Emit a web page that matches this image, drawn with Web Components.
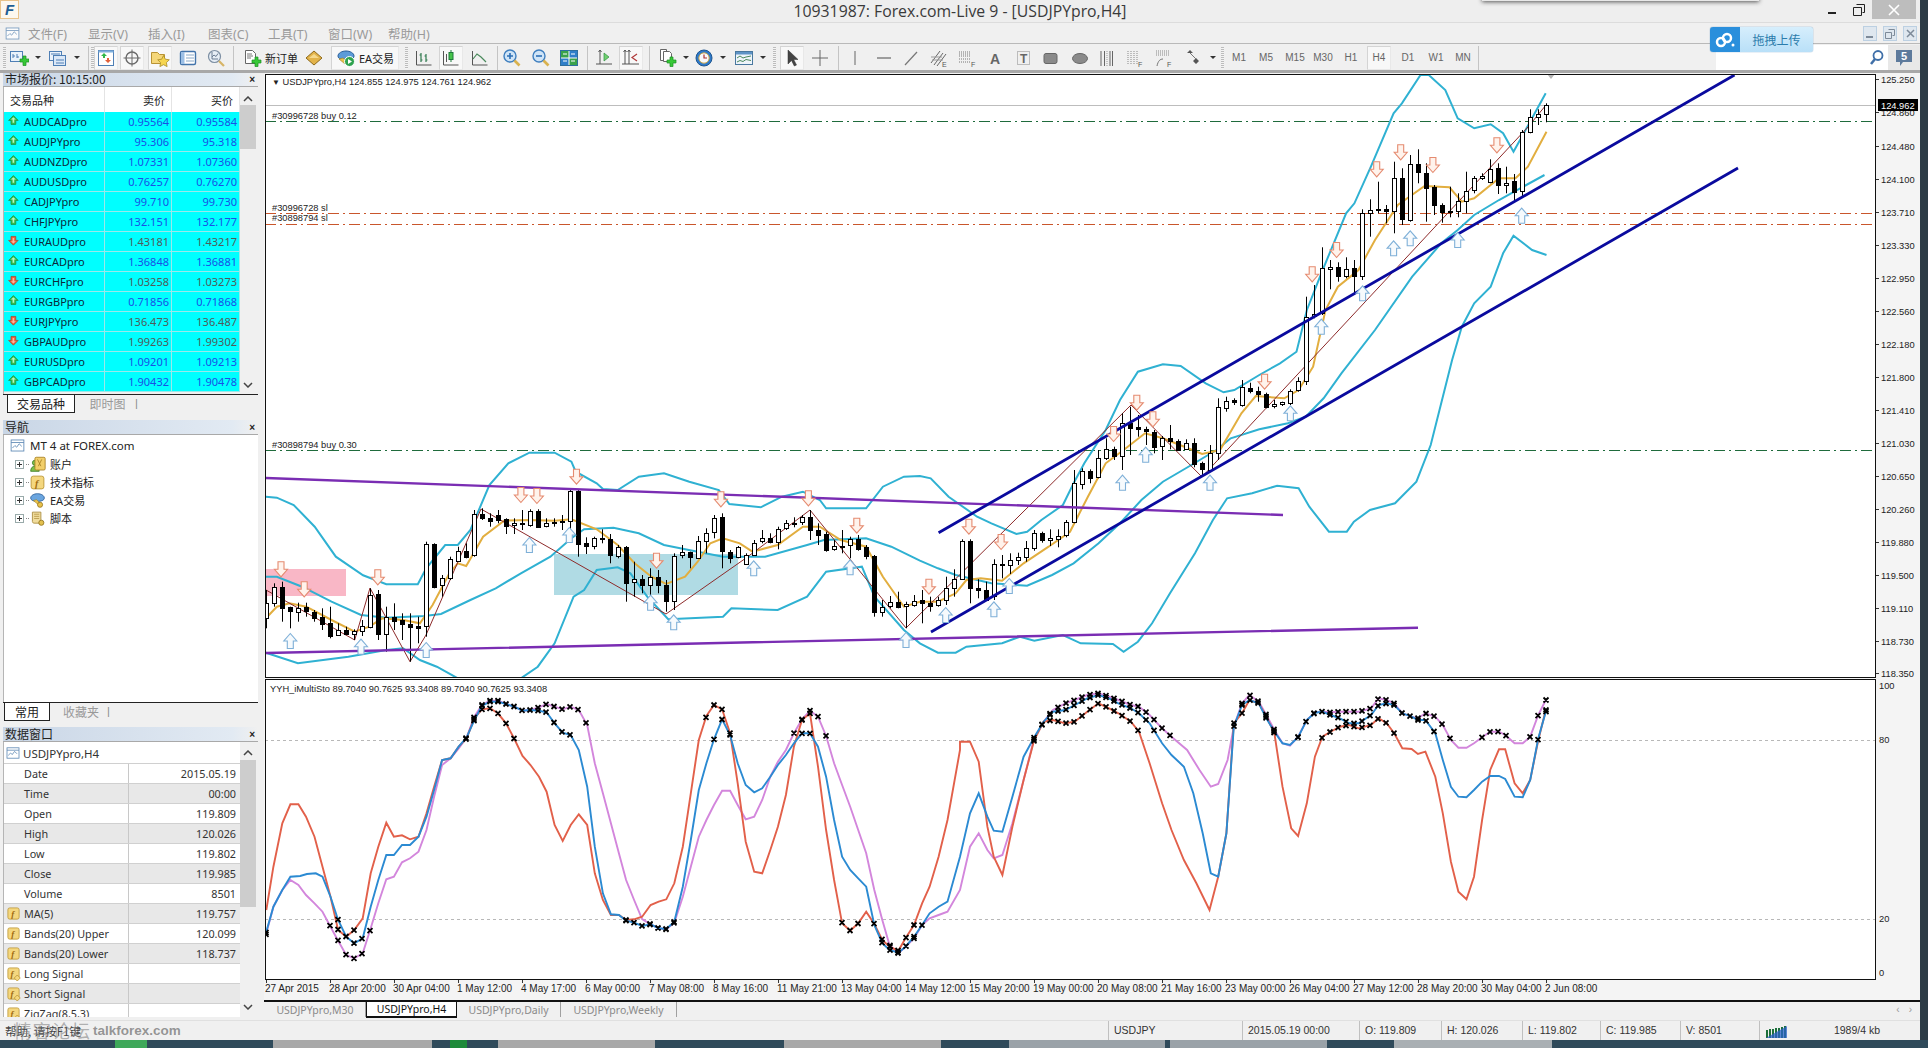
<!DOCTYPE html>
<html lang="zh">
<head>
<meta charset="utf-8">
<title>MetaTrader</title>
<style>
  html, body { margin:0; padding:0; width:1928px; height:1048px; overflow:hidden; background:#2c3b45; }
  body { font-family:"Liberation Sans","Noto Sans CJK SC",sans-serif; }
</style>
</head>
<body>
<mt-app>
  <mt-titlebar></mt-titlebar>
  <mt-menubar></mt-menubar>
  <mt-toolbar></mt-toolbar>
  <mt-main>
    <mt-dock>
      <mt-panel heading="市场报价: 10:15:00" style="height:346px"><market-watch></market-watch></mt-panel>
      <mt-panel heading="导航" style="height:302px;margin-top:2px"><nav-tree></nav-tree></mt-panel>
      <mt-panel heading="数据窗口" style="height:290px;margin-top:5px"><data-window></data-window></mt-panel>
    </mt-dock>
    <chart-window></chart-window>
  </mt-main>
  <mt-status></mt-status>
</mt-app>
<mt-taskbar></mt-taskbar>

<script>
const UI_FONT = '"Noto Sans","Noto Sans CJK SC",sans-serif';

function open(el, html) {
  const root = el.attachShadow({ mode: 'open' });
  root.innerHTML = html;
  return root;
}

// small icons, 20x20 box
const ICONS = {
  newchart: '<rect x="1.5" y="3.5" width="12" height="10" fill="#eaf2fb" stroke="#4f7fb5"/><path d="M4 10V6m0 2h2m2 2V6m0 3h2" stroke="#4f7fb5" fill="none"/><path d="M11 11h3V8h3v3h3v3h-3v3.5h-3V14h-3z" fill="#37c837" stroke="#1b8f24" stroke-width=".7"/>',
  profile: '<rect x="1.5" y="3.5" width="12" height="9" fill="#eaf2fb" stroke="#4f7fb5"/><rect x="5.5" y="7.5" width="12" height="10" fill="#dbe8f7" stroke="#4f7fb5"/><path d="M3 6h9M8 12h8m-8 3h8" stroke="#4f7fb5" fill="none"/>',
  market: '<rect x="2.5" y="2.5" width="15" height="15" fill="#fff" stroke="#4f7fb5"/><rect x="2.5" y="2.5" width="15" height="2" fill="#7fb0de"/><path d="M8 5l3 3H9v2H7V8H5z" fill="#2fb84a"/><path d="M12 15l-3-3h2v-2h2v2h2z" fill="#e2603a"/>',
  crosshair: '<circle cx="10" cy="10" r="6" fill="none" stroke="#6a6a6a" stroke-width="1.4"/><path d="M10 1.5v17M1.5 10h17" stroke="#6a6a6a"/>',
  navigator: '<path d="M1.5 4.5h6l2 2h5v9h-13z" fill="#f5d77a" stroke="#b99334"/><path d="M13.5 7.5l1.8 3.7 4 .6-2.9 2.8.7 4-3.6-1.9-3.6 1.9.7-4-2.9-2.8 4-.6z" fill="#f6d54e" stroke="#a88a27" stroke-width=".8"/>',
  terminal: '<rect x="2.5" y="3.5" width="15" height="13" rx="1.5" fill="#fff" stroke="#4374ab" stroke-width="1.4"/><rect x="3" y="4" width="3.5" height="12" fill="#9dc0e6"/><path d="M8 7h8M8 10h8M8 13h8" stroke="#8aa8c6"/>',
  tester: '<circle cx="8.5" cy="8.5" r="6" fill="#e7eef6" stroke="#7d8fa3" stroke-width="1.2"/><path d="M6 4v7h6M6 9l2-2 2 1.5 2-3" stroke="#6a7c92" fill="none"/><path d="M13 13l5 5" stroke="#d7b466" stroke-width="2.2"/>',
  neworder: '<path d="M3.5 2.5h7l3 3v10h-10z" fill="#fff" stroke="#666"/><path d="M5 6h5M5 8h6M5 10h4" stroke="#777"/><path d="M10 12h3V9h3v3h3v3h-3v3.5h-3V15h-3z" fill="#37c837" stroke="#1b8f24" stroke-width=".7"/>',
  goldtag: '<path d="M2 10l8-7 8 7-8 7z" fill="#e2b34a" stroke="#8e6a1d"/><path d="M5 10l5-4 5 4" fill="#f5d98c"/>',
  ea: '<path d="M2 8c0-3 4-5 8-5s8 2 8 5-4 4-8 4-8-1-8-4z" fill="#5c9bd8" stroke="#2a5f9a"/><path d="M3 11l6 5 2-3-4-3z" fill="#e9c14a" stroke="#9a7a20" stroke-width=".6"/><circle cx="13.5" cy="13.5" r="5" fill="#2fa34f" stroke="#fff"/><path d="M12 11v5l4-2.500z" fill="#fff"/>',
  bars: '<path d="M2.5 3v14h15" stroke="#555" fill="none"/><path d="M7 5v9M5.5 7H7m0 5h1.5M12 6v8m-1.5-6H12m0 4h1.5" stroke="#2f7a4e" stroke-width="1.2" fill="none"/>',
  candles: '<path d="M2.5 3v14h15" stroke="#555" fill="none"/><path d="M10 2v12" stroke="#1d7a3a"/><rect x="8" y="4.5" width="4" height="7" fill="#46c34a" stroke="#1d7a3a"/><path d="M5.5 6v8" stroke="#555"/>',
  line: '<path d="M2.5 3v14h15" stroke="#555" fill="none"/><path d="M3 11l4-5 4 3 5 5" stroke="#4a8a5c" fill="none" stroke-width="1.2"/>',
  zoomin: '<circle cx="8" cy="8" r="6" fill="#cfe4f7" stroke="#3f7fbf" stroke-width="1.4"/><path d="M5 8h6M8 5v6" stroke="#2c6fb5" stroke-width="1.6"/><path d="M12.5 12.5l5 5" stroke="#d9b24f" stroke-width="2.6"/>',
  zoomout: '<circle cx="8" cy="8" r="6" fill="#cfe4f7" stroke="#3f7fbf" stroke-width="1.4"/><path d="M5 8h6" stroke="#2c6fb5" stroke-width="1.6"/><path d="M12.5 12.5l5 5" stroke="#d9b24f" stroke-width="2.6"/>',
  tile: '<rect x="1.5" y="2.5" width="17" height="15" fill="#fff" stroke="#2e6f9e"/><rect x="2" y="3" width="7.5" height="6.5" fill="#3aa24a"/><rect x="10.5" y="3" width="7.5" height="6.5" fill="#2f7fc9"/><rect x="2" y="10.5" width="7.5" height="6.5" fill="#2f7fc9"/><rect x="10.5" y="10.5" width="7.5" height="6.5" fill="#3aa24a"/><path d="M4 6h4m4 0h4M4 13h4m4 0h4" stroke="#fff"/>',
  shift: '<path d="M6 2v14M2 16h16" stroke="#555" fill="none"/><path d="M4.5 4L6 2l1.5 2" stroke="#555" fill="none"/><path d="M10 5l5 4-5 4z" fill="#6fd06f" stroke="#2f8f3f" stroke-width=".7"/>',
  autoscroll: '<path d="M4 2v14m4-14v14M1 16h17" stroke="#555" fill="none"/><path d="M2.5 4L4 2l1.5 2m1 0L8 2l1.5 2" stroke="#555" fill="none"/><path d="M16 6l-5 3.5L16 13" stroke="#b03a3a" fill="none" stroke-width="1.2"/>',
  newind: '<path d="M3.5 1.5h6v11h-6z" fill="#fff" stroke="#666"/><path d="M6.5 3.5h6l2 2v8h-8z" fill="#fff" stroke="#666"/><path d="M10 12h3V9h3v3h3v3h-3v3.5h-3V15h-3z" fill="#37c837" stroke="#1b8f24" stroke-width=".7"/>',
  clock: '<circle cx="10" cy="10" r="8" fill="#2e79c9" stroke="#1d558f"/><circle cx="10" cy="10" r="5.2" fill="#f7f9fc" stroke="#c9a44a"/><path d="M10 6.5V10h3" stroke="#b03030" stroke-width="1.2" fill="none"/>',
  template: '<rect x="1.5" y="3.5" width="17" height="13" fill="#eef4fb" stroke="#49789f"/><rect x="2" y="4" width="16" height="2.5" fill="#5e93c6"/><path d="M3 10l3-2 3 2 3-1 5-1M3 14l3-1.5 3 1 3-2 5 1" stroke="#4c8a5d" fill="none"/>',
  cursor: '<path d="M6 2v14l3.5-3.5 2.800 5.500 2.200-1-2.800-5.500H16z" fill="#444" stroke="#333" stroke-width=".5"/>',
  cross: '<path d="M10 2v16M2 10h16" stroke="#666"/>',
  vline: '<path d="M10 3v14" stroke="#666"/>',
  hline: '<path d="M3 10h14" stroke="#666" stroke-width="1.2"/>',
  trend: '<path d="M4 17L16 4" stroke="#777" stroke-width="1.2"/>',
  echan: '<path d="M2 15L11 3M5 17l9-12M8 18l9-12" stroke="#666"/><path d="M2 9h11M3 12h11" stroke="#999"/><text x="13" y="19" font-size="7" fill="#555" font-family="Liberation Sans">E</text>',
  fibo: '<path d="M2 4h12M2 6h12M2 8h12M2 11h12M2 14h12" stroke="#777" stroke-dasharray="1 1"/><text x="14" y="19" font-size="7" fill="#555" font-family="Liberation Sans">F</text>',
  atext: '<text x="5" y="16" font-size="14" fill="#666" font-family="Liberation Sans" font-weight="bold">A</text>',
  ttext: '<rect x="3.5" y="3.5" width="12" height="13" fill="none" stroke="#888" stroke-dasharray="1 1"/><text x="6" y="15" font-size="12" fill="#666" font-family="Liberation Sans" font-weight="bold">T</text>',
  rect: '<rect x="3" y="5.5" width="13" height="10" rx="2" fill="#8a8a8a" stroke="#666"/>',
  ellipse: '<ellipse cx="10" cy="10.5" rx="7.5" ry="5" fill="#8a8a8a" stroke="#666"/>',
  cycle: '<path d="M4 3v15M7.5 3v15M13 3v15M15.5 3v15" stroke="#666"/><path d="M10 3v15" stroke="#999" stroke-dasharray="1 1"/>',
  fgrid: '<path d="M3 3v13M6 3v13M9 3v13M12 3v13" stroke="#888" stroke-dasharray="1 1"/><text x="13" y="19" font-size="7" fill="#555" font-family="Liberation Sans">F</text>',
  farcs: '<path d="M2 3h14M2 5h14M2 7h14" stroke="#888" stroke-dasharray="1 1"/><path d="M3 18c1-5 3-7 6-7" stroke="#777" fill="none"/><text x="13" y="19" font-size="7" fill="#555" font-family="Liberation Sans">F</text>',
  arrows: '<path d="M6 2l3 3H3zM12 10l3 3-3 3-3-3z" fill="#555"/><path d="M6 5l6 6" stroke="#777"/>',
  chartwin: '<rect x="2.5" y="3.5" width="15" height="13" fill="#fff" stroke="#5b87b4"/><path d="M2.5 6.5h15" stroke="#5b87b4"/><path d="M4 13l3-3 2 2 3-4 3 3" stroke="#5b87b4" fill="none"/>',
  fbox: '<rect x="2.5" y="2.5" width="15" height="15" rx="2.5" fill="#f4d77f" stroke="#b8922e"/><text x="7" y="15" font-size="12" font-style="italic" font-weight="bold" fill="#a06a10" font-family="Liberation Serif">f</text>',
  fboxd: '<rect x="2.5" y="2.5" width="15" height="15" rx="2.5" fill="#f4d77f" stroke="#b8922e"/><text x="6" y="14" font-size="12" font-style="italic" font-weight="bold" fill="#a06a10" font-family="Liberation Serif">f</text><path d="M15 12l4 4-4 4-4-4z" fill="#f4d77f" stroke="#b8922e"/>',
  account: '<circle cx="7" cy="8" r="3" fill="#7cc14d" stroke="#3e7d24"/><path d="M2 18c0-4 2-6 5-6s5 2 5 6z" fill="#7cc14d" stroke="#3e7d24"/><rect x="7" y="1.5" width="12" height="15" rx="1.5" fill="#f2cf6a" stroke="#a67f22"/><path d="M10 4l4 8m1-8l-4 8" stroke="#a67f22"/>',
  eatree: '<path d="M2 7c0-3 4-5 8-5s8 2 8 5-4 4-8 4-8-1-8-4z" fill="#6aa5df" stroke="#2a5f9a"/><path d="M5 10l6 5 2-2-4-4z" fill="#e9c14a" stroke="#9a7a20" stroke-width=".6"/><circle cx="13" cy="15" r="3" fill="#e9c14a" stroke="#9a7a20"/>',
  script: '<path d="M4 2.5h10v13H6c-2 0-2-2-2-2z" fill="#f0dc9c" stroke="#a88a3c"/><path d="M6 5h6M6 7.5h6M6 10h6" stroke="#b89a4c"/><circle cx="14.5" cy="15" r="3" fill="#e3c04f" stroke="#94761f"/>',
  up: '<path d="M8 2l6 6h-3v5H5V8H2z" fill="#34c24b" stroke="#1f7a30" stroke-width=".8"/><path d="M8 4L5 7h2v4h2V7h2z" fill="#bcf2c0"/>',
  down: '<path d="M8 14L2 8h3V3h6v5h3z" fill="#f0603a" stroke="#a63a1e" stroke-width=".8"/><path d="M8 12l3-3H9V5H7v4H5z" fill="#fbb59c"/>'
};

function icon(name, size) {
  const s = size || 20;
  return `<svg xmlns="http://www.w3.org/2000/svg" width="${s}" height="${s}" viewBox="0 0 20 20" style="display:block;flex:none">${ICONS[name]}</svg>`;
}

class MtApp extends HTMLElement {
  constructor() {
    super();
    open(this, `<style>
      :host { display:flex; flex-direction:column; width:1920px; height:1040px; background:#f0f0f0; position:relative; }
    </style><slot></slot>`);
  }
}

class MtTitlebar extends HTMLElement {
  constructor() {
    super();
    open(this, `<style>
      :host { display:flex; align-items:center; justify-content:center; height:23px; flex:none; background:#eeeeee;
        border-bottom:1px solid #dcdcdc; position:relative; box-sizing:border-box; }
      .logo { position:absolute; left:0; top:0; width:19px; height:19px; box-sizing:border-box; border:1px solid #e9c48c;
        background:#fdf8ef; font:italic bold 15px/17px "Liberation Sans"; color:#1f5f95; text-align:center; }
      .title { font:15.8px/23px "Open Sans",sans-serif; color:#3a3a3a; }
      .panel { position:absolute; left:1482px; top:-6px; width:277px; height:7px; background:#e8e8e8; box-shadow:0 1px 4px #555; }
      .btns { position:absolute; right:4px; top:0; display:flex; align-items:flex-start; }
      .b { width:26px; height:19px; display:flex; align-items:center; justify-content:center; }
      .close { width:44px; background:#bdbdbd; }
    </style>
    <div class="logo">F</div>
    <div class="title">10931987: Forex.com-Live 9 - [USDJPYpro,H4]</div>
    <div class="panel"></div>
    <div class="btns">
      <div class="b"><svg width="10" height="10"><rect y="7" width="8" height="2" fill="#222"/></svg></div>
      <div class="b"><svg width="12" height="12"><path d="M3.5.5h8v8h-2M.5 3.5h8v8h-8z" fill="#eee" stroke="#222"/></svg></div>
      <div class="b close"><svg width="12" height="12"><path d="M1 1l10 10M11 1L1 11" stroke="#fff" stroke-width="1.6"/></svg></div>
    </div>`);
  }
}

class MtMenubar extends HTMLElement {
  constructor() {
    super();
    const items = ['文件(F)', '显示(V)', '插入(I)', '图表(C)', '工具(T)', '窗口(W)', '帮助(H)'];
    open(this, `<style>
      :host { display:flex; align-items:center; height:21px; flex:none; background:#f0f0f0; border-bottom:1px solid #b9b9b9;
        box-sizing:border-box; position:relative; font:12.5px ${UI_FONT}; color:#9a9a9a; padding-left:4px; }
      .m { width:60px; flex:none; white-space:nowrap; }
      .ic { width:24px; flex:none; opacity:.8; }
      .mdi { position:absolute; right:3px; top:3px; display:flex; gap:6px; }
      .mdi div { width:14px; height:15px; box-sizing:border-box; border:1px solid #bcd0e2; background:#dfe7ef; color:#7d8a99; display:flex; align-items:center; justify-content:center; }
      .up { position:absolute; left:1710px; top:4px; width:103px; height:25px; display:flex; border-radius:3px; box-shadow:0 0 1px #1a6aa8; overflow:hidden; z-index:5; }
      .up .l { width:30px; background:#2a8fdc; display:flex; align-items:center; justify-content:center; }
      .up .r { flex:1; background:linear-gradient(#d6eefc,#b9e0f8); color:#2b7cab; font:12px "Noto Sans CJK SC",sans-serif; line-height:25px; text-align:center; }
    </style>
    <div class="ic">${icon('chartwin', 17)}</div>
    ${items.map(t => `<div class="m">${t}</div>`).join('')}
    <div class="mdi">
      <div><svg width="8" height="8"><rect y="6" width="7" height="2" fill="#7d8a99"/></svg></div>
      <div><svg width="10" height="10"><path d="M3.5.5h6v6h-2M.5 3.5h6v6h-6z" fill="none" stroke="#7d8a99"/></svg></div>
      <div><svg width="9" height="9"><path d="M1 1l7 7M8 1L1 8" stroke="#7d8a99" stroke-width="1.5"/></svg></div>
    </div>
    <div class="up">
      <div class="l"><svg width="22" height="18"><circle cx="7" cy="11" r="4" fill="none" stroke="#fff" stroke-width="2.5"/><circle cx="13" cy="7" r="4" fill="none" stroke="#fff" stroke-width="2.5"/><circle cx="19" cy="14" r="1.5" fill="#fff"/></svg></div>
      <div class="r">拖拽上传</div>
    </div>`);
  }
}

class TbButton extends HTMLElement {
  constructor() { super(); this.attachShadow({ mode: 'open' }); }
  connectedCallback() {
    const name = this.getAttribute('icon');
    const label = this.getAttribute('label');
    this.shadowRoot.innerHTML = `<style>
      :host { display:flex; align-items:center; justify-content:center; height:24px; flex:none; box-sizing:border-box;
        font:11px ${UI_FONT}; color:#222; gap:3px; border:1px solid transparent; }
      :host([pressed]) { background:#f8f8f8; border-color:#d4d4d4 #e8e8e8 #e8e8e8 #d4d4d4; }
      .tf { font:10px "Liberation Sans",sans-serif; color:#666; }
      .arr { width:0; height:0; border:3px solid transparent; border-top:3px solid #333; border-bottom:0; margin-left:3px; }
    </style>
    ${name ? icon(name) : ''}
    ${label ? `<span class="${this.hasAttribute('tf') ? 'tf' : ''}">${label}</span>` : ''}
    ${this.hasAttribute('arrow') ? '<i class="arr"></i>' : ''}`;
  }
}

class MtToolbar extends HTMLElement {
  constructor() {
    super();
    const items = [
      ['h', 4], ['newchart', 18, 22, 'a'], ['profile', 57, 22, 'a'],
      ['s', 88], ['h', 92],
      ['market', 106, 24, 'p'], ['crosshair', 132, 24, 'p'], ['navigator', 160, 24, 'p'], ['terminal', 188, 24], ['tester', 216, 24],
      ['s', 233], ['neworder', 270, 60, '', '新订单'], ['goldtag', 314, 22], ['ea', 365, 68, 'p', 'EA交易'],
      ['h', 406], ['bars', 424, 24], ['candles', 451, 24, 'p'], ['line', 480, 24],
      ['s', 497], ['zoomin', 512, 24], ['zoomout', 541, 24], ['tile', 569, 24],
      ['s', 587], ['shift', 604, 24], ['autoscroll', 631, 24, 'p'],
      ['s', 649], ['newind', 666, 22, 'a'], ['clock', 703, 22, 'a'], ['template', 743, 22, 'a'],
      ['h', 774], ['cursor', 792, 24, 'p'], ['cross', 820, 24],
      ['s', 838], ['vline', 855, 24], ['hline', 884, 24], ['trend', 911, 24], ['echan', 939, 24], ['fibo', 967, 24],
      ['atext', 995, 24], ['ttext', 1024, 24], ['rect', 1051, 24], ['ellipse', 1080, 24], ['cycle', 1107, 24],
      ['fgrid', 1135, 24], ['farcs', 1164, 24], ['arrows', 1193, 22, 'a'],
      ['h', 1222], ['t', 1239, 'M1'], ['t', 1266, 'M5'], ['t', 1295, 'M15'], ['t', 1323, 'M30'], ['t', 1351, 'H1'],
      ['t', 1379, 'H4', 'p'], ['t', 1408, 'D1'], ['t', 1436, 'W1'], ['t', 1463, 'MN'], ['s', 1478]
    ];
    // each item sits in the flow, margin makes up the distance from the one before
    let end = 0;
    let html = '';
    for (const it of items) {
      const kind = it[0];
      const c = it[1];
      let w, cell;
      if (kind === 's') { w = 1; cell = '<i class="sep"></i>'; }
      else if (kind === 'h') { w = 3; cell = '<i class="grip"></i>'; }
      else if (kind === 't') {
        w = 24;
        cell = `<tb-button style="width:24px" label="${it[2]}" tf ${it[3] ? 'pressed' : ''}></tb-button>`;
      } else {
        w = it[2];
        const hasArrow = it[3] === 'a';
        const label = it[4] ? `label="${it[4]}"` : '';
        const full = hasArrow ? w + 12 : w;
        const extra = hasArrow ? 'justify-content:flex-start;padding-left:1px' : '';
        cell = `<tb-button style="width:${full}px;${extra}" icon="${kind}" ${label} ${hasArrow ? 'arrow' : ''} ${it[3] === 'p' ? 'pressed' : ''}></tb-button>`;
        html += `<span class="cell" style="margin-left:${c - w / 2 - end}px">${cell}</span>`;
        end = c - w / 2 + full;
        continue;
      }
      html += `<span class="cell" style="margin-left:${c - w / 2 - end}px">${cell}</span>`;
      end = c - w / 2 + w;
    }
    open(this, `<style>
      :host { display:flex; align-items:center; height:29px; flex:none; box-sizing:border-box; background:#f0f0f0;
        border-bottom:3px solid #a8a8a8; position:relative; padding-top:1px; }
      .cell { display:block; flex:none; }
      .sep { display:block; width:1px; height:24px; background:#c4c4c4; }
      .grip { display:block; width:3px; height:22px; background:repeating-linear-gradient(#bcbcbc 0 1px,#f4f4f4 1px 2px); }
      .search { position:absolute; left:1716px; top:1px; height:25px; width:172px; background:#fff; display:flex; align-items:center; justify-content:flex-end; padding-right:4px; box-sizing:border-box; }
      .badge { position:absolute; left:1888px; top:1px; height:25px; width:32px; background:#e8e8e8; display:flex; align-items:center; justify-content:center; }
    </style>${html}
    <div class="search"><svg width="16" height="18"><circle cx="10" cy="6.5" r="4.5" fill="none" stroke="#3f6fa8" stroke-width="1.8"/><path d="M7 10l-4 5" stroke="#3f6fa8" stroke-width="2.5"/></svg></div>
    <div class="badge"><svg width="18" height="20"><path d="M1 2h16v12H8l-3 4v-4H1z" fill="#5d7a9c"/><text x="9" y="12" font-size="11" font-weight="bold" text-anchor="middle" fill="#fff" font-family="Liberation Sans">5</text></svg></div>`);
  }
}

class MtMain extends HTMLElement {
  constructor() {
    super();
    open(this, `<style>:host { display:flex; flex:1; min-height:0; }</style><slot></slot>`);
  }
}

class MtDock extends HTMLElement {
  constructor() {
    super();
    // the first title bar starts a pixel above the chart's top edge
    open(this, `<style>
      :host { display:flex; flex-direction:column; width:264px; flex:none; box-sizing:border-box; padding:0 6px 0 3px; margin-top:-1px; background:#f0f0f0; }
    </style><slot></slot>`);
  }
}

class MtPanel extends HTMLElement {
  constructor() {
    super();
    open(this, `<style>
      :host { display:flex; flex-direction:column; flex:none; box-sizing:border-box; }
      .head { height:15px; flex:none; display:flex; align-items:center; justify-content:space-between; box-sizing:border-box;
        background:linear-gradient(90deg,#c9d6e6,#e2eaf3 90%,#f0f0f0); border-bottom:1px solid #a9a9a9;
        font:12px/14px "Noto Sans CJK SC",sans-serif; color:#222; padding-left:2px; }
      .x { font:bold 10px "Liberation Sans",sans-serif; color:#222; margin-right:3px; }
      .body { flex:1; min-height:0; border-left:1px solid #b5b5b5; background:#fff; display:flex; }
    </style>
    <div class="head"><span>${this.getAttribute('heading')}</span><span class="x">×</span></div>
    <div class="body"><slot></slot></div>`);
  }
}

const SCROLL_CSS = `
  .sb { width:16px; flex:none; background:#f0f0f0; position:relative; }
  .sb .thumb { position:absolute; left:0; right:0; background:#cdcdcd; }
  .sb svg { position:absolute; left:3px; }
  .tabs { height:24px; flex:none; box-sizing:border-box; background:#f0f0f0; border-top:1px solid #222; display:flex; font:12px "Noto Sans CJK SC",sans-serif; color:#999; margin-left:-1px; }
  .tab { display:flex; align-items:center; justify-content:center; height:17px; }
  .tab.on { background:#fff; color:#222; border:1px solid #222; border-top:0; }
  .bar { color:#888; height:17px; line-height:17px; font:11px/17px "Liberation Sans"; }
`;

class MarketWatch extends HTMLElement {
  constructor() {
    super();
    const rows = [
      ['AUDCADpro', '0.95564', '0.95584', 1], ['AUDJPYpro', '95.306', '95.318', 1], ['AUDNZDpro', '1.07331', '1.07360', 1],
      ['AUDUSDpro', '0.76257', '0.76270', 1], ['CADJPYpro', '99.710', '99.730', 1], ['CHFJPYpro', '132.151', '132.177', 1],
      ['EURAUDpro', '1.43181', '1.43217', 0], ['EURCADpro', '1.36848', '1.36881', 1], ['EURCHFpro', '1.03258', '1.03273', 0],
      ['EURGBPpro', '0.71856', '0.71868', 1], ['EURJPYpro', '136.473', '136.487', 0], ['GBPAUDpro', '1.99263', '1.99302', 0],
      ['EURUSDpro', '1.09201', '1.09213', 1], ['GBPCADpro', '1.90432', '1.90478', 1]
    ];
    const body = rows.map(r => `<div class="row ${r[3] ? 'pos' : 'neg'}">
      <div class="sym">${icon(r[3] ? 'up' : 'down', 16)}<span>${r[0]}</span></div><div class="p">${r[1]}</div><div class="p">${r[2]}</div>
    </div>`).join('');
    open(this, `<style>
      :host { display:flex; flex-direction:column; flex:1; min-width:0; font:11px ${UI_FONT}; background:#f0f0f0; }
      ${SCROLL_CSS}
      .top { display:flex; flex:1; min-height:0; }
      .list { width:236px; flex:none; display:flex; flex-direction:column; }
      .row { display:grid; grid-template-columns:101px 67px 68px; height:20px; flex:none; box-sizing:border-box; background:#00ffff; border-bottom:1px solid #9be8e8; align-items:center; }
      .hd { height:25px; background:#fff; border-bottom:0; font:11px "Noto Sans CJK SC",sans-serif; color:#222; }
      .hd div { border-right:1px solid #e4e4e4; height:100%; display:flex; align-items:center; box-sizing:border-box; }
      .hd .r { justify-content:flex-end; padding-right:6px; }
      .hd .l { padding-left:6px; }
      .sym { display:flex; align-items:center; gap:1px; padding-left:3px; color:#0c2a3a; border-right:1px solid #9be8e8; height:100%; box-sizing:border-box; }
      .p { text-align:right; padding-right:2px; border-right:1px solid #9be8e8; height:100%; line-height:19px; box-sizing:border-box; }
      .pos .p { color:#1a50e6; } .neg .p { color:#505a5a; }
    </style>
    <div class="top">
      <div class="list">
        <div class="row hd"><div class="l">交易品种</div><div class="r">卖价</div><div class="r">买价</div></div>
        ${body}
      </div>
      <div class="sb"><svg style="top:9px" width="10" height="6"><path d="M1 5l4-4 4 4" fill="none" stroke="#444" stroke-width="1.5"/></svg>
        <div class="thumb" style="top:18px;height:44px"></div>
        <svg style="bottom:6px" width="10" height="6"><path d="M1 1l4 4 4-4" fill="none" stroke="#444" stroke-width="1.5"/></svg></div>
    </div>
    <div class="tabs"><div class="tab on" style="width:66px;margin-left:4px">交易品种</div><div class="tab" style="width:55px;margin-left:5px">即时图</div><span class="bar">|</span></div>`);
  }
}

class NavTree extends HTMLElement {
  constructor() {
    super();
    const nodes = [['account', '账户'], ['fbox', '技术指标'], ['eatree', 'EA交易'], ['script', '脚本']];
    open(this, `<style>
      :host { display:flex; flex-direction:column; flex:1; min-width:0; font:11.5px ${UI_FONT}; color:#222; }
      ${SCROLL_CSS}
      .tabs { height:20px; }
      .tree { flex:1; min-height:0; padding:1px 0 0 5px; }
      .n { display:flex; align-items:center; height:18px; }
      .root { gap:4px; height:19px; }
      .pm { width:9px; height:9px; box-sizing:border-box; border:1px solid #9aa; margin:0 2px 0 6px; flex:none; position:relative; background:#fff; }
      .pm::after { content:''; position:absolute; left:1px; right:1px; top:3px; height:1px; background:#333; }
      .pm::before { content:''; position:absolute; top:1px; bottom:1px; left:3px; width:1px; background:#333; }
      .dots { width:3px; border-top:1px dotted #888; flex:none; margin-right:0; }
      .n span { margin-left:4px; font-size:11px; }
    </style>
    <div class="tree">
      <div class="n root">${icon('chartwin', 17)}<div>MT 4 at FOREX.com</div></div>
      ${nodes.map(n => `<div class="n"><i class="pm"></i><i class="dots"></i>${icon(n[0], 17)}<span>${n[1]}</span></div>`).join('')}
    </div>
    <div class="tabs"><div class="tab on" style="width:44px;margin-left:1px">常用</div><div class="tab" style="width:52px;margin-left:5px">收藏夹</div><span class="bar">|</span></div>`);
  }
}

class DataWindow extends HTMLElement {
  constructor() {
    super();
    const rows = [
      ['', 'Date', '2015.05.19'], ['', 'Time', '00:00'], ['', 'Open', '119.809'], ['', 'High', '120.026'],
      ['', 'Low', '119.802'], ['', 'Close', '119.985'], ['', 'Volume', '8501'], ['fbox', 'MA(5)', '119.757'],
      ['fbox', 'Bands(20) Upper', '120.099'], ['fbox', 'Bands(20) Lower', '118.737'], ['fboxd', 'Long Signal', ''],
      ['fboxd', 'Short Signal', ''], ['fboxd', 'ZigZag(8,5,3)', '']
    ];
    open(this, `<style>
      :host { display:flex; flex:1; min-width:0; font:10.8px ${UI_FONT}; color:#333; height:100%; overflow:hidden; background:#f0f0f0; }
      ${SCROLL_CSS}
      .list { width:236px; flex:none; overflow:hidden; background:#fff; }
      .top { height:21px; display:flex; align-items:center; gap:2px; padding-left:1px; font-size:11.5px; box-sizing:border-box; padding-top:1px; }
      .row { display:grid; grid-template-columns:125px 111px; height:20px; box-sizing:border-box; border-top:1px solid #d0d0d0; }
      .row:nth-child(odd) { background:#e8e8e8; }
      .a { display:flex; align-items:center; padding-left:20px; position:relative; border-right:1px solid #c8c8c8; }
      .a svg { position:absolute; left:2px; top:2px; }
      .b { text-align:right; padding-right:4px; line-height:19px; }
    </style>
    <div class="list">
      <div class="top">${icon('chartwin', 16)}<span>USDJPYpro,H4</span></div>
      ${rows.map(r => `<div class="row"><div class="a">${r[0] ? icon(r[0], 15) : ''}${r[1]}</div><div class="b">${r[2]}</div></div>`).join('')}
    </div>
    <div class="sb"><svg style="top:8px" width="10" height="6"><path d="M1 5l4-4 4 4" fill="none" stroke="#444" stroke-width="1.5"/></svg>
      <div class="thumb" style="top:18px;height:147px"></div>
      <svg style="bottom:7px" width="10" height="6"><path d="M1 1l4 4 4-4" fill="none" stroke="#444" stroke-width="1.5"/></svg></div>`);
  }
}

class ChartWindow extends HTMLElement {
  constructor() {
    super();
    const tabs = ['USDJPYpro,M30', 'USDJPYpro,H4', 'USDJPYpro,Daily', 'USDJPYpro,Weekly'];
    const widths = [101, 91, 104, 116];
    open(this, `<style>
      :host { display:flex; flex-direction:column; flex:1; min-width:0; }
      .strip { height:20px; flex:none; display:flex; align-items:flex-start; background:#f0f0f0; border-top:2px solid #111; box-sizing:border-box; font:10.5px "Noto Sans",sans-serif; color:#8a8a8a; position:relative; padding-left:1px; }
      .tab { height:15px; display:flex; align-items:center; justify-content:center; box-sizing:border-box; border-right:1px solid #a0a0a0; }
      .tab.on { height:16px; background:#fff; color:#111; border:1px solid #111; border-top:0; border-bottom-width:2px; }
      .nav { position:absolute; right:8px; top:2px; display:flex; gap:9px; color:#999; font:10px "Liberation Sans"; }
    </style>
    <forex-chart></forex-chart>
    <div class="strip">
      ${tabs.map((t, i) => `<div class="tab ${i === 1 ? 'on' : ''}" style="width:${widths[i]}px">${t}</div>`).join('')}
      <div class="nav"><span>‹</span><span>›</span></div>
    </div>`);
  }
}

// helpers turning coordinates read off crops of the chart into page pixels
const zoomed = (ox, sx, oy) => pts => pts.map(p => [ox + p[0] / sx, oy + p[1] / 3]);
const z6 = zoomed(260, 2.376, 430);
const z7 = zoomed(920, 2.8, 330);
const z8 = zoomed(1280, 2.42, 60);
const z9 = zoomed(260, 2.24, 680);
const z10 = zoomed(950, 1.603, 680);

const CANDLES_A = [[520,565,480,595,1],[472,520,460,530,1],[470,532,455,575,0],[532,545,530,595,0],[533,545,518,575,1],[532,545,518,560,0],[545,562,540,575,0],[560,580,535,600,0],[580,618,530,625,0],[600,615,580,618,1],[600,612,590,615,0],[602,610,598,630,1],[587,602,570,618,1],[495,590,475,595,1],[493,612,480,630,0],[560,610,530,665,1],[560,572,520,600,0],[570,583,550,630,0],[582,592,550,695,0],[587,592,560,640,0],[343,590,335,620,1],[342,470,340,475,0],[445,467,435,500,1],[388,445,380,450,1],[363,392,350,395,1],[363,380,340,385,0],[253,377,240,380,1],[252,265,235,270,0],[265,275,250,290,0],[255,270,240,280,0],[268,290,265,312,0],[280,287,265,312,1],[280,284,240,300,0],[242,283,238,290,1],[242,290,238,292,0],[280,289,265,292,1],[275,278,265,290,0],[273,277,255,300,0],[184,274,180,300,1],[182,340,180,380,0],[340,350,322,372,0],[325,350,320,358,1],[325,328,298,340,0],[328,375,312,400,0],[350,377,345,385,1],[350,458,348,515,0],[448,458,395,500,1],[448,467,435,490,0],[442,467,415,500,1],[442,467,420,490,0],[465,512,450,545,0],[377,512,370,540,1],[367,376,345,385,1],[367,383,365,415,0],[332,383,318,385,1],[308,332,295,370,1],[265,308,255,325,1],[262,365,250,415,0],[365,383,360,400,0],[352,383,348,385,1],[375,403,370,405,1],[338,375,330,378,1],[325,335,300,340,1],[323,335,310,340,0],[296,335,290,358,1],[280,295,270,300,1],[278,282,262,292,0],[262,277,255,285,1],[262,302,240,330,0],[300,315,280,345,0],[312,360,305,365,0],[348,358,330,362,1],[347,350,300,370,0],[328,346,320,385,1],[327,358,315,362,0],[352,380,345,388,0],[378,545,375,560,0],[530,545,510,560,1],[517,530,498,535,1],[517,533,485,535,0],[523,530,515,595,1],[512,523,495,530,1]];
const CANDLES_B = [[810,818,780,880,0],[818,826,800,845,0],[810,826,800,830,1],[775,810,740,825,1],[748,775,718,800,1],[633,748,628,750,1],[633,775,628,820,0],[775,780,748,805,0],[780,810,755,812,0],[703,800,688,810,1],[703,707,675,745,0],[690,706,670,732,1],[682,692,668,705,1],[655,682,633,695,1],[610,655,600,662,1],[610,632,605,638,0],[625,632,598,648,1],[617,625,598,652,1],[577,617,570,622,1],[460,577,420,580,1],[422,460,415,478,1],[422,443,418,460,0],[385,443,360,445,1],[358,385,325,390,1],[358,380,350,390,0],[278,376,250,420,1],[278,292,230,375,0],[292,297,255,320,0],[297,304,290,345,0],[305,350,300,370,0],[325,350,318,390,1],[325,335,285,358,0],[332,358,328,362,0],[338,355,328,358,1],[338,402,325,412,0],[400,418,395,440,0],[368,420,345,425,1],[232,370,205,390,1],[212,233,200,245,1],[210,216,205,225,0],[172,225,150,230,1],[174,182,158,190,0],[182,192,170,215,0],[192,230,188,235,0],[222,228,210,235,1],[217,222,215,228,1],[182,218,178,225,1],[152,180,142,185,1]];
const CANDLES_C = [[762,768,675,775,1],[625,760,562,765,1],[620,625,600,688,1],[620,647,607,665,0],[626,647,592,655,1],[625,650,600,700,0],[460,650,448,660,1],[450,460,418,530,1],[447,451,365,460,0],[448,455,435,490,0],[355,455,305,520,1],[355,478,325,495,0],[313,480,285,485,1],[313,338,268,370,0],[338,383,310,485,0],[380,433,375,465,0],[435,455,430,488,0],[452,455,380,472,0],[422,452,400,472,1],[392,422,335,460,1],[355,392,348,400,1],[348,355,340,360,1],[328,368,298,370,1],[325,375,310,402,0],[368,375,320,400,1],[362,395,342,425,0],[217,393,210,410,1],[172,217,148,220,1],[163,172,148,195,1],[135,163,130,187,1]];

const BAND_UP = [...z6([[14,200],[40,203],[80,225],[130,290],[180,380],[245,436],[300,463],[375,463],[395,415],[440,345],[470,345],[500,300],[545,165],[590,100],[640,68],[700,68],[740,95],[750,125],[800,160],[815,177],[850,180],[900,140],[960,130],[1020,155],[1090,180],[1115,222],[1190,232],[1240,200],[1290,185],[1330,210],[1345,235],[1440,235],[1480,170],[1530,140],[1568,138]]),
  ...z7([[30,445],[80,500],[160,560],[200,580],[270,612],[300,605],[340,570],[400,525],[430,460],[460,400],[520,300],[560,210],[610,125],[680,103],[730,108],[800,160],[850,187],[880,180],[950,135]]),
  ...z8([[0,910],[40,875],[65,750],[100,640],[130,550],[160,460],[180,430],[220,320],[275,160],[295,130],[340,45],[360,45],[400,90],[430,175],[470,205],[510,193],[540,220],[565,275],[590,220],[643,100]])];
const BAND_MID = [...z6([[14,440],[40,440],[100,470],[170,515],[240,555],[300,563],[390,558],[430,552],[500,510],[560,475],[620,430],[690,380],[740,325],[770,298],[840,293],[900,310],[960,345],[1040,365],[1100,380],[1200,380],[1300,345],[1340,330],[1440,325],[1500,350],[1568,392]]),
  ...z7([[50,715],[100,735],[200,760],[300,767],[370,735],[430,700],[500,640],[560,580],[620,510],[680,455],[760,405],[830,360],[870,325],[950,298],[1030,280],[1080,260],[1130,205],[1180,130]]),
  ...z8([[230,810],[320,650],[390,550],[430,510],[470,465],[530,420],[640,345]])];
const BAND_LOW = [...z6([[14,668],[90,700],[150,690],[210,680],[300,660],[340,655],[380,690],[420,710],[470,745],[620,745],[660,710],[700,640],[745,500],[770,480],[800,420],[850,412],[880,430],[920,500],[970,568],[1100,560],[1120,535],[1230,540],[1300,500],[1345,425],[1430,410],[1460,500],[1530,600],[1568,640]]),
  ...z7([[50,968],[100,968],[130,950],[230,940],[280,920],[320,932],[400,915],[450,940],[540,942],[570,965],[610,935],[650,880],[700,790],[770,670],[820,570],[860,505],[930,490],[1000,467],[1060,475],[1090,530],[1145,605],[1195,605],[1215,575],[1260,540],[1330,520],[1390,455],[1430,345],[1490,90]]),
  ...z8([[440,800],[470,730],[510,680],[540,580],[565,527],[610,570],[645,585]])];
const MA_LINE = [...z6([[14,565],[40,530],[70,520],[110,530],[170,570],[225,605],[260,590],[290,565],[340,570],[380,580],[410,525],[450,430],[470,400],[490,408],[530,320],[580,272],[640,270],[700,272],[740,268],[800,298],[850,345],[890,400],[930,440],[965,462],[1010,440],[1040,395],[1070,340],[1100,325],[1140,340],[1170,365],[1230,345],[1290,290],[1330,290],[1380,330],[1440,350],[1480,440],[1530,530],[1568,515]]),
  ...z7([[50,815],[100,790],[130,750],[170,745],[230,752],[290,700],[360,650],[420,605],[470,500],[520,400],[570,360],[630,310],[680,325],[740,350],[790,372],[840,360],[900,250],[940,198],[1020,205],[1060,180]]),
  ...z8([[80,920],[110,750],[140,680],[190,630],[230,540],[285,435],[350,378],[410,382],[440,425],[470,415],[530,355],[570,355],[600,320],[645,215]])];
const ZIGZAG = [[266,590],[354.7,640],[370,588],[410,661.7],[426,635],[481,509],[666,614],[746,558],[810,510],[906,628],[1131,405],[1202,477],[1528,127],[1546,105]];

const STO_RED = [...z9([[14,690],[30,560],[50,430],[68,373],[86,373],[103,410],[122,470],[140,560],[158,650],[175,750],[193,770],[211,750],[230,715],[248,580],[265,500],[283,428],[300,470],[318,466],[336,478],[355,470],[373,400],[390,320],[408,240],[427,235],[445,200],[463,175],[480,115],[497,88],[515,85],[533,100],[551,130],[570,178],[588,228],[606,255],[625,290],[642,335],[660,435],[678,483],[696,435],[714,403],[733,435],[750,580],[768,660],[786,705],[804,705],[820,720],[838,718],[856,710],[875,675],[893,665],[910,658],[928,610],[947,500],[965,340],[983,180],[1000,108],[1017,75],[1035,88],[1053,160],[1070,310],[1088,485],[1107,575],[1125,580],[1143,510],[1160,440],[1178,345],[1196,200],[1214,120],[1232,100],[1250,260],[1268,450],[1286,600],[1304,730],[1322,752],[1340,730],[1358,695],[1376,732],[1394,780],[1410,800],[1430,812],[1446,775],[1465,735],[1483,670],[1500,620],[1520,530],[1540,420],[1568,210]]),
  ...z10([[16,185],[32,185],[46,245],[60,440],[70,530],[84,585],[100,440],[118,300],[135,180],[150,125],[165,120],[185,130],[200,125],[220,95],[238,70],[255,85],[270,100],[290,125],[303,155],[320,250],[340,370],[355,450],[375,540],[395,610],[416,690],[430,590],[443,460],[455,130],[468,100],[480,60],[495,70],[507,110],[520,160],[533,320],[547,445],[558,468],[572,370],[585,230],[597,170],[610,155],[625,140],[640,135],[655,145],[675,135],[687,115],[700,130],[712,160],[725,205],[740,207],[750,222],[762,215],[778,290],[790,400],[803,545],[815,635],[828,658],[840,590],[853,420],[866,270],[880,208],[890,208],[905,310],[918,340],[930,300],[943,180],[955,90]])];
const STO_BLUE = [...z9([[14,755],[30,680],[50,630],[68,590],[90,588],[105,582],[125,580],[140,590],[158,650],[175,720],[193,770],[211,790],[230,775],[248,680],[265,600],[283,525],[300,525],[318,495],[336,495],[355,470],[373,410],[390,330],[408,240],[427,235],[445,200],[463,172],[480,120],[497,78],[515,65],[533,65],[551,72],[570,80],[588,92],[606,90],[625,92],[642,97],[660,130],[678,158],[696,165],[714,210],[733,320],[750,500],[768,640],[786,703],[804,705],[820,722],[838,728],[856,738],[875,733],[893,745],[910,747],[928,725],[947,620],[965,480],[983,330],[1000,250],[1017,178],[1035,118],[1053,165],[1070,250],[1088,315],[1107,337],[1125,325],[1143,290],[1160,255],[1178,225],[1196,190],[1214,160],[1232,160],[1250,200],[1268,290],[1286,420],[1304,530],[1322,570],[1340,595],[1358,620],[1376,735],[1394,790],[1410,810],[1430,818],[1446,800],[1465,770],[1483,735],[1500,700],[1520,680],[1540,665],[1568,530]]),
  ...z10([[32,400],[46,340],[60,410],[70,452],[84,455],[100,350],[118,230],[135,172],[150,125],[165,95],[185,90],[200,75],[220,55],[238,45],[255,55],[270,70],[290,85],[303,100],[320,130],[340,190],[355,225],[375,260],[390,340],[405,460],[418,580],[430,590],[443,460],[455,140],[468,75],[480,60],[495,70],[507,115],[520,155],[533,190],[545,195],[558,172],[572,120],[585,98],[597,95],[610,105],[625,115],[640,130],[655,130],[675,105],[687,75],[700,70],[712,75],[725,100],[740,110],[750,120],[762,120],[778,160],[790,240],[803,320],[815,350],[828,352],[840,330],[853,305],[866,288],[880,288],[890,297],[905,350],[918,352],[930,300],[943,175],[955,95]])];
const STO_VIOLET = [...z9([[14,760],[30,680],[50,630],[68,600],[86,615],[103,645],[122,670],[140,695],[158,740],[175,782],[193,825],[211,835],[230,820],[248,745],[265,670],[283,598],[300,590],[318,547],[336,535],[355,515],[373,450],[390,350],[408,255],[427,235],[445,205],[463,172],[480,110],[497,75],[515,62],[533,62],[551,72],[570,80],[588,92],[606,90],[625,82],[642,72],[660,80],[678,88],[696,80],[714,90],[733,135],[750,250],[768,340],[786,430],[804,520],[820,600],[838,660],[856,717],[875,733],[893,745],[910,748],[928,728],[947,650],[965,560],[983,470],[1000,420],[1017,375],[1035,332],[1053,332],[1070,375],[1088,418],[1107,410],[1125,360],[1143,290],[1160,245],[1178,210],[1196,160],[1214,118],[1232,92],[1250,110],[1268,168],[1286,250],[1304,315],[1322,380],[1340,450],[1358,520],[1376,630],[1394,720],[1410,795],[1430,820],[1446,800],[1465,775],[1483,735],[1500,715],[1520,705],[1540,695],[1568,630]]),
  ...z10([[32,500],[46,460],[60,510],[70,535],[84,525],[100,430],[118,300],[135,175],[150,125],[165,90],[185,70],[200,60],[220,45],[238,40],[255,50],[270,60],[290,75],[303,80],[320,105],[340,145],[355,170],[380,210],[400,270],[418,320],[430,312],[445,240],[455,140],[468,70],[480,45],[495,65],[507,105],[520,150],[533,190],[545,197],[558,170],[572,120],[585,97],[597,95],[610,97],[625,95],[640,95],[655,95],[675,85],[687,55],[700,60],[712,70],[725,100],[740,110],[750,115],[762,100],[778,110],[790,135],[803,180],[815,203],[828,203],[840,190],[853,172],[866,155],[880,155],[890,165],[905,190],[918,190],[930,170],[943,105],[955,60]])];

const ARROWS_DOWN = [...z6([[50,418],[105,478],[280,442],[620,195],[658,198],[752,140],[942,392],[1095,208],[1303,205],[1418,287]]),
  ...z7([[25,770],[137,590],[227,636],[542,312],[607,218],[652,268],[965,155]]),
  ...z8([[78,643],[137,570],[234,328],[292,277],[370,315],[525,256]])];
const ARROWS_UP = [...z6([[72,633],[240,650],[395,660],[640,345],[735,315],[928,518],[983,577],[1173,415],[1402,412],[1535,630]]),
  ...z7([[72,855],[207,838],[250,768],[567,458],[632,374],[812,458],[1037,250]]),
  ...z8([[100,800],[200,700],[275,565],[315,535],[430,540],[585,467]])];

const PRICE_LABELS = [[125.25,79],[124.86,112],[124.48,146],[124.1,179],[123.71,212],[123.33,245],[122.95,278],[122.56,311],[122.18,344],[121.8,377],[121.41,410],[121.03,443],[120.65,476],[120.26,509],[119.88,542],[119.5,575],[119.11,608],[118.73,641],[118.35,673]];
const TIME_LABELS = ['27 Apr 2015','28 Apr 20:00','30 Apr 04:00','1 May 12:00','4 May 17:00','6 May 00:00','7 May 08:00','8 May 16:00','11 May 21:00','13 May 04:00','14 May 12:00','15 May 20:00','19 May 00:00','20 May 08:00','21 May 16:00','23 May 00:00','26 May 04:00','27 May 12:00','28 May 20:00','30 May 04:00','2 Jun 08:00'];

const pts = list => list.map(p => p[0].toFixed(1) + ',' + p[1].toFixed(1)).join(' ');

function yAt(line, x) {
  if (x < line[0][0] - 1 || x > line[line.length - 1][0] + 1) return null;
  for (let i = 1; i < line.length; i++) {
    if (x <= line[i][0]) {
      const a = line[i - 1], b = line[i];
      return a[1] + (b[1] - a[1]) * (x - a[0]) / ((b[0] - a[0]) || 1);
    }
  }
  return line[line.length - 1][1];
}

class ForexChart extends HTMLElement {
  constructor() {
    super();
    this.attachShadow({ mode: 'open' });
  }

  connectedCallback() {
    const out = [];
    out.push('<clipPath id="main"><rect x="265" y="74" width="1610" height="603"/></clipPath>');
    out.push('<clipPath id="sub"><rect x="265" y="680" width="1610" height="299"/></clipPath>');
    out.push('<g clip-path="url(#main)">');
    out.push('<rect x="266" y="569" width="80" height="27" fill="#f9b7c6"/>');
    out.push('<rect x="554" y="554" width="184" height="41" fill="#b0dbe4"/>');
    out.push('<path d="M265 105.5H1875" stroke="#bdbdbd"/>');
    [[121.5, '#1f6b3c'], [450.5, '#1f6b3c'], [213.5, '#c9562c'], [224.5, '#c9562c']].forEach(l => {
      out.push(`<path d="M265 ${l[0]}H1875" stroke="${l[1]}" stroke-dasharray="11 4 2 4"/>`);
    });
    out.push(`<polyline points="${pts(BAND_UP)}" class="band"/><polyline points="${pts(BAND_MID)}" class="band"/><polyline points="${pts(BAND_LOW)}" class="band"/>`);
    out.push(`<polyline points="${pts(MA_LINE)}" fill="none" stroke="#e2ae3f" stroke-width="2"/>`);
    out.push(`<polyline points="${pts(ZIGZAG)}" fill="none" stroke="#8d2a2a" stroke-width="1"/>`);
    out.push(this.renderCandles());
    out.push('<path d="M266 478L1283 515M266 653L1418 627.7" stroke="#7a2db3" stroke-width="2.4" fill="none"/>');
    out.push('<path d="M938.6 532.7L1734.5 75M931 632L1738 168" stroke="#0a0a9e" stroke-width="2.8" fill="none"/>');
    ARROWS_DOWN.forEach(p => out.push(this.arrow(p[0], p[1], true)));
    ARROWS_UP.forEach(p => out.push(this.arrow(p[0], p[1], false)));
    out.push('<path d="M1547 74h8l-4 5z" fill="#b5b5b5"/>');
    out.push('</g>');
    out.push('<text x="272" y="85" class="t"><tspan font-size="8">▼</tspan> USDJPYpro,H4  124.855 124.975 124.761 124.962</text>');
    out.push('<text x="272" y="119" class="t">#30996728 buy 0.12</text>');
    out.push('<text x="272" y="211" class="t">#30996728 sl</text>');
    out.push('<text x="272" y="221" class="t">#30898794 sl</text>');
    out.push('<text x="272" y="448" class="t">#30898794 buy 0.30</text>');

    // sub window
    out.push('<text x="270" y="692" class="t">YYH_iMultiSto 89.7040 90.7625 93.3408 89.7040 90.7625 93.3408</text>');
    out.push('<path d="M265 740.5H1875M265 919.5H1875" stroke="#b8b8b8" stroke-dasharray="3 3"/>');
    out.push('<g clip-path="url(#sub)">');
    out.push(`<polyline points="${pts(STO_VIOLET)}" class="sto" stroke="#d386dc"/>`);
    out.push(`<polyline points="${pts(STO_RED)}" class="sto" stroke="#e2604a"/>`);
    out.push(`<polyline points="${pts(STO_BLUE)}" class="sto" stroke="#2b8ad2"/>`);
    out.push(this.renderMarks());
    out.push('</g>');

    // frames and axes
    out.push('<rect x="265.5" y="74.5" width="1610" height="603" class="frame"/>');
    out.push('<rect x="265.5" y="679.5" width="1610" height="300" class="frame"/>');
    PRICE_LABELS.forEach(p => {
      out.push(`<path d="M1876 ${p[1] + .5}h3" stroke="#333"/><text x="1881" y="${p[1] + 3.5}" class="ax p">${p[0].toFixed(3)}</text>`);
    });
    out.push('<rect x="1878" y="99" width="40" height="12" fill="#000"/><text x="1881" y="108.5" class="ax p" style="fill:#fff">124.962</text>');
    [['100', 689], ['80', 743], ['20', 922], ['0', 976]].forEach(p => {
      out.push(`<text x="1879" y="${p[1]}" class="ax p">${p[0]}</text>`);
    });
    TIME_LABELS.forEach((t, i) => {
      const x = 266 + 64 * i;
      out.push(`<path d="M${x + .5} 980v3" stroke="#333"/><text x="${x - 1}" y="992" class="ax">${t}</text>`);
    });

    this.shadowRoot.innerHTML = `<style>
      :host { display:block; flex:1; min-height:0; background:#f4f4f4; }
      svg { display:block; }
      .band { fill:none; stroke:#2fb1d2; stroke-width:2; }
      .sto { fill:none; stroke-width:1.9; }
      .t { font-family:"Liberation Sans",sans-serif; font-size:9.3px; fill:#222; }
      .ax { font-family:"Liberation Sans",sans-serif; font-size:10px; fill:#222; }
      .ax.p { font-size:9.3px; }
      .frame { fill:none; stroke:#111; }
    </style>
    <svg xmlns="http://www.w3.org/2000/svg" width="1656" height="927" viewBox="264 73 1656 927">
      <rect x="265" y="74" width="1610" height="603" fill="#fff"/>
      <rect x="265" y="680" width="1610" height="299" fill="#fff"/>
      ${out.join('')}
    </svg>`;
  }

  renderCandles() {
    const all = [];
    const add = (k, top, bot, hi, lo, white) => {
      const x = 266 + 8 * k;
      let s = `<path d="M${x + .5} ${hi.toFixed(1)}V${lo.toFixed(1)}" stroke="#000"/>`;
      const h = Math.max(bot - top, 1);
      if (white) s += `<rect x="${x - 1.5}" y="${Math.round(top) + .5}" width="4" height="${Math.round(h)}" fill="#fff" stroke="#000"/>`;
      else s += `<rect x="${x - 2}" y="${Math.round(top)}" width="5" height="${Math.round(h) + 1}" fill="#000"/>`;
      all.push(s);
    };
    CANDLES_A.forEach((c, i) => add(i, 430 + c[0] / 3, 430 + c[1] / 3, 430 + c[2] / 3, 430 + c[3] / 3, c[4]));
    CANDLES_B.forEach((c, i) => add(82 + i, 330 + c[0] / 3, 330 + c[1] / 3, 330 + c[2] / 3, 330 + c[3] / 3, c[4]));
    add(130, 316.7, 381, 296.7, 385, 1);
    CANDLES_C.forEach((c, i) => add(131 + i, 60 + c[0] / 3, 60 + c[1] / 3, 60 + c[2] / 3, 60 + c[3] / 3, c[4]));
    return all.join('');
  }

  arrow(cx, cy, down) {
    const d = down
      ? 'M-3 -7.5H3V0H6.5L0 7.5L-6.5 0H-3Z'
      : 'M-3 7.5H3V0H6.5L0 -7.5L-6.5 0H-3Z';
    const col = down ? '#e58b70' : '#7fb0d8';
    const fill = down ? '#fff3ec' : '#f6fafd';
    return `<path transform="translate(${cx.toFixed(1)} ${cy.toFixed(1)})" d="${d}" fill="${fill}" stroke="${col}" stroke-width="1.1"/>`;
  }

  renderMarks() {
    let d = '';
    for (let k = 0; k <= 160; k++) {
      const x = 266 + 8 * k;
      [STO_RED, STO_BLUE, STO_VIOLET].forEach(line => {
        const y = yAt(line, x);
        if (y !== null && (y < 741 || y > 919.5)) {
          d += `M${x - 2.5} ${(y - 2.5).toFixed(1)}l5 5m0-5l-5 5`;
        }
      });
    }
    return `<path d="${d}" stroke="#000" stroke-width="1.8" fill="none"/>`;
  }
}

class MtStatus extends HTMLElement {
  constructor() {
    super();
    const cells = [['USDJPY', 134], ['2015.05.19 00:00', 117], ['O: 119.809', 82], ['H: 120.026', 81], ['L: 119.802', 78], ['C: 119.985', 80], ['V: 8501', 79]];
    open(this, `<style>
      :host { display:flex; height:20px; flex:none; box-sizing:border-box; align-items:center; background:#f0f0f0; border-top:1px solid #e0e0e0;
        font:10.5px "Liberation Sans",sans-serif; color:#333; position:relative; }
      .help { width:1108px; flex:none; padding-left:5px; box-sizing:border-box; font:11.5px "Noto Sans CJK SC",sans-serif; color:#444; }
      .c { box-sizing:border-box; flex:none; border-left:1px solid #c0c0c0; padding-left:5px; height:100%; line-height:19px; white-space:nowrap; }
      .wm { position:absolute; left:13px; top:0; font:bold 13.5px/19px "Liberation Sans","Noto Sans CJK SC",sans-serif; color:rgba(95,95,95,.65); white-space:nowrap; display:flex; align-items:center; gap:2px; }
      .wm b { font:18.5px/19px "Noto Sans CJK SC",sans-serif; color:rgba(120,120,120,.55); letter-spacing:1px; }
      .conn { display:flex; align-items:center; justify-content:space-between; padding-right:40px; }
    </style>
    <div class="help">帮助, 请按F1键</div>
    ${cells.map(c => `<div class="c" style="width:${c[1]}px">${c[0]}</div>`).join('')}
    <div class="c conn" style="width:161px">
      <svg width="24" height="14"><path d="M1 14V6h2v8zM4 14V5h2v9zM7 14V5h2v9zM10 14V4h2v10zM13 14V4h2v10zM16 14V3h2v11zM19 14V2h2v12z" fill="#1b6f3a"/><path d="M1 14L22 2V14z" fill="#2b62c8" opacity=".75"/></svg>
      <span>1989/4 kb</span>
    </div>
    <div class="wm"><b>精客论坛</b><span>talkforex.com</span></div>`);
  }
}

class MtTaskbar extends HTMLElement {
  constructor() {
    super();
    const items = [[115, 32, '#3fa85a'], [273, 159, '#a8a8a8'], [450, 17, '#1e8a3a'], [498, 157, '#a8a8a8'], [784, 157, '#a8a8a8'], [1009, 156, '#9aa2a8'], [1170, 157, '#9aa2a8'], [1394, 158, '#a9afb3']];
    let end = 0, html = '';
    items.forEach(it => {
      html += `<i style="margin-left:${it[0] - end}px;width:${it[1]}px;background:${it[2]}"></i>`;
      end = it[0] + it[1];
    });
    open(this, `<style>
      :host { display:flex; position:absolute; left:0; top:1040px; width:1928px; height:8px; background:#2f4a5a; overflow:hidden; }
      i { display:block; height:8px; flex:none; }
    </style>${html}`);
  }
}

customElements.define('mt-app', MtApp);
customElements.define('mt-titlebar', MtTitlebar);
customElements.define('mt-menubar', MtMenubar);
customElements.define('tb-button', TbButton);
customElements.define('mt-toolbar', MtToolbar);
customElements.define('mt-main', MtMain);
customElements.define('mt-dock', MtDock);
customElements.define('mt-panel', MtPanel);
customElements.define('market-watch', MarketWatch);
customElements.define('nav-tree', NavTree);
customElements.define('data-window', DataWindow);
customElements.define('chart-window', ChartWindow);
customElements.define('forex-chart', ForexChart);
customElements.define('mt-status', MtStatus);
customElements.define('mt-taskbar', MtTaskbar);
</script>
</body>
</html>
